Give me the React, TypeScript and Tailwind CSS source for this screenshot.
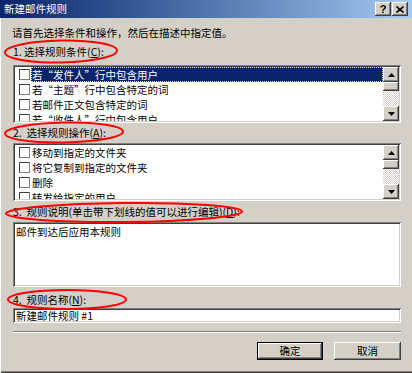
import type { ReactNode } from 'react';

const raised =
  'bg-[#d4d0c8] shadow-[inset_-1px_-1px_0_#404040,inset_1px_1px_0_#ffffff,inset_-2px_-2px_0_#808080,inset_2px_2px_0_#d4d0c8]';
const sunken =
  'shadow-[inset_1px_1px_0_#808080,inset_-1px_-1px_0_#ffffff,inset_2px_2px_0_#404040,inset_-2px_-2px_0_#d4d0c8]';

function Arrow({ down }: { down?: boolean }) {
  return (
    <svg width="7" height="4" viewBox="0 0 7 4">
      <polygon points={down ? '0,0 7,0 3.5,4' : '0,4 7,4 3.5,0'} fill="#000" />
    </svg>
  );
}

function ScrollBar() {
  return (
    <div className="w-[16px] flex flex-col">
      <div className={`h-[15px] flex items-center justify-center ${raised}`}>
        <Arrow />
      </div>
      <div className={`h-[9px] ${raised}`} />
      <div className="flex-1 bg-[image:repeating-conic-gradient(#d4d0c8_0%_25%,#ffffff_0%_50%)] bg-[length:2px_2px]" />
      <div className={`h-[15px] flex items-center justify-center ${raised}`}>
        <Arrow down />
      </div>
    </div>
  );
}

function CheckRow({ text, selected }: { text: string; selected?: boolean }) {
  return (
    <div className="h-[15px] flex items-center">
      <span className="ml-[4px] w-[11px] h-[11px] bg-white border border-t-[#404040] border-l-[#404040] border-b-[#808080] border-r-[#808080] shrink-0" />
      <span
        className={`ml-[1px] h-[15px] flex-1 flex items-center pl-[1px] whitespace-nowrap ${
          selected ? 'bg-[#0a246a] text-white outline outline-1 outline-dotted outline-[#e8e890] -outline-offset-1' : ''
        }`}
      >
        {text}
      </span>
    </div>
  );
}

function ListBox({ children }: { children: ReactNode }) {
  return (
    <div className={`h-[58px] bg-white p-[2px] flex ${sunken}`}>
      <div className="flex-1 overflow-hidden flex flex-col">{children}</div>
      <ScrollBar />
    </div>
  );
}

function Label({ children, className = '' }: { children: ReactNode; className?: string }) {
  return <div className={`h-[12px] leading-[12px] whitespace-pre ${className}`}>{children}</div>;
}

export default function App() {
  return (
    <div className="w-[412px] h-[373px] bg-[#d4d0c8] relative flex flex-col text-[10.5px] text-black font-['Noto_Sans_CJK_SC','Liberation_Sans',sans-serif] shadow-[inset_1px_0_0_#ffffff,inset_0_-1px_0_#404040,inset_0_-2px_0_#808080] overflow-hidden">
      {/* 标题栏 */}
      <div className="h-[18px] shrink-0 flex items-center bg-gradient-to-r from-[#0a246a] to-[#a6caf0] pl-[4px] pr-[4px]">
        <span className="text-white flex-1 leading-[12px]">新建邮件规则</span>
        <div className={`w-[16px] h-[14px] flex items-center justify-center ${raised}`}>
          <span className="font-['Liberation_Sans',sans-serif] font-bold text-[11px] leading-[11px] mt-[1px]">?</span>
        </div>
        <div className={`ml-[1px] w-[16px] h-[14px] flex items-center justify-center ${raised}`}>
          <svg width="8" height="7" viewBox="0 0 8 7">
            <path d="M0.5 0.5 L7.5 6.5 M7.5 0.5 L0.5 6.5" stroke="#000" strokeWidth="1.6" />
          </svg>
        </div>
      </div>

      {/* 内容 */}
      <div className="flex-1 flex flex-col pl-[13px] pr-[11px]">
        <Label className="mt-[9px] -ml-[1px]">请首先选择条件和操作，然后在描述中指定值。</Label>

        <Label className="mt-[7px]">
          1. 选择规则条件(<span className="underline">C</span>):
        </Label>
        <div className="mt-[7px]">
          <ListBox>
            <CheckRow text="若“发件人”行中包含用户" selected />
            <CheckRow text="若“主题”行中包含特定的词" />
            <CheckRow text="若邮件正文包含特定的词" />
            <CheckRow text="若“收件人”行中包含用户" />
          </ListBox>
        </div>

        <Label className="mt-[4px]">
          2.  选择规则操作(<span className="underline">A</span>):
        </Label>
        <div className="mt-[4px]">
          <ListBox>
            <CheckRow text="移动到指定的文件夹" />
            <CheckRow text="将它复制到指定的文件夹" />
            <CheckRow text="删除" />
            <CheckRow text="转发给指定的用户" />
          </ListBox>
        </div>

        <Label className="mt-[5px]">
          3.  规则说明(单击带下划线的值可以进行编辑)(<span className="underline">D</span>):
        </Label>
        <div className={`mt-[4px] h-[65px] bg-white pt-[2px] pl-[3px] ${sunken}`}>
          <div className="h-[12px] leading-[12px] mt-[2px]">邮件到达后应用本规则</div>
        </div>

        <Label className="mt-[7px]">
          4.  规则名称(<span className="underline">N</span>):
        </Label>
        <div className={`mt-[2px] h-[15px] bg-white pl-[3px] flex items-center ${sunken}`}>
          <span className="leading-[12px]">新建邮件规则 #1</span>
        </div>

        <div className="mt-[8px] h-[2px] border-t border-t-[#808080] border-b border-b-white" />

        <div className="mt-[9px] flex justify-end gap-[11px]">
          <button className="w-[66px] h-[18px] border border-black bg-[#d4d0c8] shadow-[inset_-1px_-1px_0_#404040,inset_1px_1px_0_#ffffff,inset_-2px_-2px_0_#808080] leading-[12px]">
            确定
          </button>
          <button className={`w-[67px] h-[18px] leading-[12px] ${raised}`}>取消</button>
        </div>
      </div>

      {/* 红色圈注 */}
      <svg className="absolute inset-0 pointer-events-none" width="412" height="373" viewBox="0 0 412 373">
        <g fill="none" stroke="#ff0000" strokeWidth="2">
          <ellipse cx="61" cy="51.5" rx="56" ry="11" transform="rotate(-1 61 51.5)" />
          <ellipse cx="64" cy="132.5" rx="59" ry="10" transform="rotate(-1 64 132.5)" />
          <ellipse cx="124" cy="212.5" rx="118" ry="9.5" transform="rotate(-0.5 124 212.5)" />
          <ellipse cx="67" cy="299.5" rx="59" ry="9.5" />
        </g>
      </svg>
    </div>
  );
}
